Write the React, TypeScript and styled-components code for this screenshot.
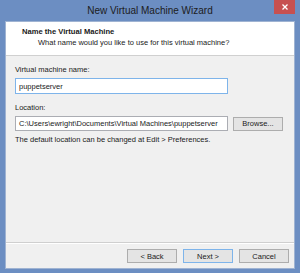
import React from "react";
import styled, { createGlobalStyle } from "styled-components";

const GlobalStyle = createGlobalStyle`
  html, body {
    margin: 0;
    padding: 0;
    background: #6c8ec2;
  }
  * {
    box-sizing: border-box;
  }
`;

const Window = styled.div`
  width: 300px;
  height: 273px;
  background: #6c8ec2;
  display: flex;
  flex-direction: column;
  padding: 0 5px 4px 5px;
  font-family: "Liberation Sans", Arial, sans-serif;
  color: #1a1a1a;
`;

const TitleBar = styled.div`
  height: 21px;
  flex: none;
  display: flex;
  align-items: center;
  justify-content: center;
  position: relative;
`;

const Title = styled.span`
  font-size: 10px;
  color: #1c1c1c;
  margin-top: -1px;
`;

const CloseButton = styled.div`
  position: absolute;
  top: 0;
  right: 0;
  width: 21px;
  height: 14px;
  background: #c75050;
  display: flex;
  align-items: center;
  justify-content: center;
`;

const Client = styled.div`
  flex: 1;
  display: flex;
  flex-direction: column;
  background: #f0f0f0;
  border: 1px solid #9fb3d2;
`;

const Header = styled.div`
  height: 34px;
  flex: none;
  background: #ffffff;
  border-bottom: 1px solid #d0d0d0;
  padding: 5px 0 0 16px;
`;

const HeaderTitle = styled.div`
  font-size: 7.6px;
  font-weight: bold;
  line-height: 10px;
`;

const HeaderSub = styled.div`
  font-size: 7.5px;
  line-height: 10px;
  padding-left: 16px;
  margin-top: 1px;
`;

const Body = styled.div`
  flex: 1;
  display: flex;
  flex-direction: column;
  padding: 9px 0 0 9px;
`;

const Label = styled.div<{ $gap?: number }>`
  font-size: 7.5px;
  line-height: 10px;
  margin-top: ${(p) => p.$gap ?? 0}px;
`;

const Row = styled.div`
  display: flex;
  align-items: center;
  gap: 5px;
  margin-top: 3px;
`;

const Field = styled.div<{ $focused?: boolean; $h: number }>`
  width: 213px;
  height: ${(p) => p.$h}px;
  background: #ffffff;
  border: 1px solid ${(p) => (p.$focused ? "#7eb4ea" : "#abadb3")};
  font-size: 7.5px;
  display: flex;
  align-items: center;
  padding-left: 3px;
  white-space: nowrap;
  overflow: hidden;
`;

const Button = styled.div<{ $default?: boolean }>`
  width: 50px;
  height: 14px;
  background: #e4e4e4;
  border: 1px solid ${(p) => (p.$default ? "#7eb4ea" : "#adadad")};
  font-size: 7.5px;
  display: flex;
  align-items: center;
  justify-content: center;
`;

const Hint = styled.div`
  font-size: 7.5px;
  line-height: 10px;
  margin-top: 4px;
`;

const Footer = styled.div`
  flex: none;
  border-top: 1px solid #cfcfcf;
  box-shadow: inset 0 1px 0 #ffffff;
  display: flex;
  justify-content: flex-end;
  gap: 6px;
  padding: 6px 5px 5px 0;
`;

export default function App() {
  return (
    <>
      <GlobalStyle />
      <Window>
        <TitleBar>
          <Title>New Virtual Machine Wizard</Title>
          <CloseButton>
            <svg width="6" height="6" viewBox="0 0 6 6">
              <path d="M0.5 0.5L5.5 5.5M5.5 0.5L0.5 5.5" stroke="#ffffff" strokeWidth="1.3" />
            </svg>
          </CloseButton>
        </TitleBar>
        <Client>
          <Header>
            <HeaderTitle>Name the Virtual Machine</HeaderTitle>
            <HeaderSub>What name would you like to use for this virtual machine?</HeaderSub>
          </Header>
          <Body>
            <Label>Virtual machine name:</Label>
            <Row>
              <Field $focused $h={16}>puppetserver</Field>
            </Row>
            <Label $gap={9}>Location:</Label>
            <Row>
              <Field $h={15}>C:\Users\ewright\Documents\Virtual Machines\puppetserver</Field>
              <Button>Browse...</Button>
            </Row>
            <Hint>The default location can be changed at Edit &gt; Preferences.</Hint>
          </Body>
          <Footer>
            <Button>&lt; Back</Button>
            <Button $default>Next &gt;</Button>
            <Button>Cancel</Button>
          </Footer>
        </Client>
      </Window>
    </>
  );
}
